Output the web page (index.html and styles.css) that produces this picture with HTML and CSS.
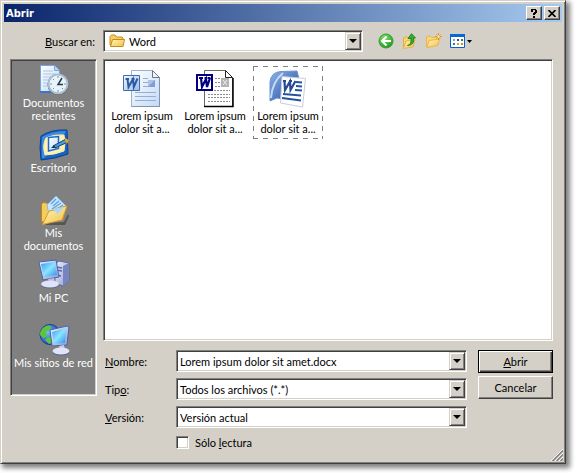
FILE: index.html
```html
<!DOCTYPE html>
<html lang="es">
<head>
<meta charset="utf-8">
<title>Abrir</title>
<link rel="stylesheet" href="styles.css">
</head>
<body>
<svg class="defs" aria-hidden="true">
  <defs>
    <linearGradient id="screen" x1="0" y1="0" x2="1" y2="1"><stop offset="0" stop-color="#2c9cf4"/><stop offset=".5" stop-color="#8be4ff"/><stop offset="1" stop-color="#2b8bea"/></linearGradient>
    <linearGradient id="folder" x1="0" y1="0" x2="1" y2="1"><stop offset="0" stop-color="#fff6b8"/><stop offset="1" stop-color="#f3c04a"/></linearGradient>
    <linearGradient id="paper" x1="0" y1="0" x2="1" y2="1"><stop offset="0" stop-color="#ffffff"/><stop offset="1" stop-color="#c4d9f4"/></linearGradient>
    <linearGradient id="blue" x1="0" y1="0" x2="1" y2="1"><stop offset="0" stop-color="#8fb3e8"/><stop offset="1" stop-color="#1d4a9e"/></linearGradient>
    <linearGradient id="badge" x1="0" y1="0" x2="1" y2="1"><stop offset="0" stop-color="#f4f8ff"/><stop offset="1" stop-color="#9dbbe8"/></linearGradient>
    <linearGradient id="metal" x1="0" y1="0" x2="1" y2="1"><stop offset="0" stop-color="#eef0fc"/><stop offset="1" stop-color="#8f9bd0"/></linearGradient>
    <radialGradient id="green" cx=".4" cy=".3" r=".7"><stop offset="0" stop-color="#8be070"/><stop offset="1" stop-color="#1f9a22"/></radialGradient>
    <radialGradient id="globe" cx=".35" cy=".35" r=".7"><stop offset="0" stop-color="#7cc3ff"/><stop offset="1" stop-color="#0c3fae"/></radialGradient>
  </defs>
</svg>
<main class="dialog">
  <header class="titlebar">
    <h1>Abrir</h1>
    <button class="caption" type="button" aria-label="Ayuda"><svg width="8" height="9" viewBox="0 0 8 9"><path d="M1 0h5v1h1v3H6v1H5v1H3V4h1V3h1V1H3v2H1zM3 7h2v2H3z"/></svg></button>
    <button class="caption" type="button" aria-label="Cerrar"><svg width="8" height="7" viewBox="0 0 8 7"><path d="M.5 0 7.500 7M7.500 0 .5 7" stroke="#000" stroke-width="1.600"/></svg></button>
  </header>

  <div class="toolbar">
    <label for="lookin"><u>B</u>uscar en:</label>
    <div class="combo combo-folder">
      <svg class="combo-icon" width="16" height="14" viewBox="0 0 16 14"><path d="M1 11V2.500L2.500 1H6l1.500 2H13l1 1v7z" fill="#f7cf63" stroke="#c98a1c"/><path d="M1.500 12.500 3.500 5.500H15.500L14 12.500z" fill="url(#folder)" stroke="#c98a1c"/></svg>
      <select id="lookin"><option>Word</option></select>
      <span class="arrow"></span>
    </div>
    <div class="tools">
      <button type="button" aria-label="Atrás"><svg width="16" height="16" viewBox="0 0 16 16"><circle cx="8" cy="8" r="7" fill="url(#green)" stroke="#33a02c"/><path d="M8.500 3.500 4 8l4.500 4.500M4.500 8H13" fill="none" stroke="#fff" stroke-width="2"/></svg></button>
      <button type="button" aria-label="Subir un nivel"><svg width="16" height="16" viewBox="0 0 16 16"><path d="M1.500 14.500V5l3-1.500L6 5l5-1v8z" fill="#f8d66f" stroke="#dfae42"/><path d="M1.500 15.500 4 8l9-2-2 8z" fill="url(#folder)" stroke="#e3b64c"/><path d="M5.500 12.500Q9.500 12 9 5.500H6L9.500.700 13.500 5H11.500Q13 12 5.500 12.500z" fill="#37ad2b" stroke="#16791a" stroke-width=".8"/></svg></button>
      <button type="button" aria-label="Crear nueva carpeta"><svg width="16" height="16" viewBox="0 0 16 16"><path d="M.5 14V4L4 3l1.500 1.500L12 4v8z" fill="#f8d878" stroke="#e6b652"/><path d="M1 14.500 3 7.500 13.500 6 11.500 12.500z" fill="url(#folder)" stroke="#e6b652"/><path d="M12.500 0v7M9 3.500h7M10.500 1.500l4 4M14.500 1.500l-4 4" stroke="#dc9428"/><circle cx="12.500" cy="3.500" r="1.200" fill="#fff3b0"/></svg></button>
      <button type="button" aria-label="Vistas"><svg width="23" height="16" viewBox="0 0 23 16"><path d="M.5 1.500h14v13H.5z" fill="#fff" stroke="#0a5fd0"/><path d="M0 1h15v3H0z" fill="#0868d8"/><path d="M3 6h2v2H3z" fill="#9a9ab0"/><path d="M7 6h2v2H7z" fill="#2848b8"/><path d="M11 6h2v2h-2z" fill="#33913a"/><path d="M3 10h2v2H3z" fill="#3c68d8"/><path d="M7 10h2v2H7z" fill="#d8a020"/><path d="M11 10h2v2h-2z" fill="#c89028"/><path d="M17 7h5l-2.500 3z"/></svg></button>
    </div>
  </div>

  <div class="content">
    <nav class="places">
      <a href="#recientes"><svg width="32" height="32" viewBox="0 0 32 32"><path d="M2.500 1.500h14l5 5v21h-19z" fill="url(#paper)" stroke="#73a6e8"/><path d="M16.500 1.500v5h5" fill="#b8d4fa" stroke="#73a6e8"/><path d="M5 7h10M5 10h13M5 13h8M5 16h6M5 19h5M5 22h5" stroke="#a9c6ee"/><path d="M2 28h20" stroke="#3974d8" stroke-width="2"/><circle cx="20" cy="20.500" r="10.500" fill="#46505c"/><circle cx="20" cy="20" r="9.500" fill="#e7f3fa" stroke="#aebdca" stroke-width="2"/><path d="M20 12v2M20 26v2M12 20h2M26 20h2M15 15l1 1M24 24l1 1M15 25l1-1" stroke="#7490aa"/><path d="M24 14 20 20.500H25" fill="none" stroke="#27394c" stroke-width="1.500"/></svg><span>Documentos recientes</span></a>
      <a href="#escritorio"><svg width="32" height="32" viewBox="0 0 32 32"><path d="M3 7Q14 0 29 1l1 24Q17 30 3 31Q1 18 3 7z" fill="#1564c8" stroke="#0a3f94"/><path d="M4 8Q14 2 28 2l-2 4L6 29H4z" fill="#4c9df0" opacity=".7"/><path d="M8 9Q16 5 26 6Q28 14 26 22Q16 26 7 26Q4 16 8 9z" fill="#fff0b5" stroke="#ffe9a0"/><path d="M10.500 8.500 20.500 7.500V19.500L10.500 22z" fill="url(#paper)" stroke="#1b6ad0" stroke-width="1.500"/><path d="m15 17 13-7 2 3-13 6z" fill="#489dd8" stroke="#154872"/><path d="m13 19 3-3 2 3z" fill="#163a5c"/><path d="m27 9 4 2-2 4-2-3z" fill="#e4a030"/></svg><span>Escritorio</span></a>
      <a href="#documentos"><svg width="32" height="32" viewBox="0 0 32 32"><path d="m6 29 20-1 4-8 1 2-4 9H8z" fill="#555"/><path d="M3.500 28V10l2-1.500 5 1 2 3 13-2v15z" fill="#f5cd57" stroke="#bd8520"/><path d="m9 11 9-9 10 10-8 13-8 1z" fill="#c9e6ff" stroke="#85b9e8"/><path d="m13 10 5-5M15 12l6-5M14 15l9-6M16 17l9-6M17 20l7-6" stroke="#62a5e6" stroke-width="1.500"/><path d="M4.500 30.500 11 17l5-1 3-2 10-2-5 14z" fill="url(#folder)" stroke="#d59d2d"/><path d="m15 16 4-2 7-1-6 7z" fill="#a9d7fa"/></svg><span>Mis documentos</span></a>
      <a href="#pc"><svg width="32" height="32" viewBox="0 0 32 32"><path d="m17 5 4-3 10 2v18l-6 5-8-3z" fill="url(#metal)" stroke="#5d6cae"/><path d="m25 7 6-3v18l-6 5z" fill="#7784bc"/><path d="m18 8 6 1M18 11l6 1M19 16l4 1" stroke="#5868a8" stroke-width="1.500"/><path d="m1 3 17-2 3 17-16 3z" fill="url(#metal)" stroke="#4a62b0"/><path d="m3 5 14-2 2 13-13 2z" fill="url(#screen)"/><path d="m10 20 6-1 1 4-6 1z" fill="#b4bde4"/><ellipse cx="12" cy="26" rx="9" ry="3.500" fill="#5d678e"/><ellipse cx="12" cy="25" rx="9" ry="3.500" fill="#dfe3f8"/></svg><span>Mi PC</span></a>
      <a href="#red"><svg width="32" height="32" viewBox="0 0 32 32"><circle cx="12" cy="10.500" r="10" fill="url(#globe)" stroke="#183c94"/><path d="M4 5q5-5 9-3l-1 4-4 2 1 4-3 2-4-3q0-4 2-6zM10 13l5 1-1 5-3 1-4-4z" fill="#5cc63b"/><path d="m12 6 17-4 2 1-2 18-15 1z" fill="url(#metal)" stroke="#4a62b0"/><path d="m14 8 14-4-1 15-11 1z" fill="url(#screen)"/><path d="m21 22 5-1 1 5h-5z" fill="#c6cce8"/><ellipse cx="23" cy="28" rx="8.500" ry="3.500" fill="#56608a"/><ellipse cx="23" cy="27" rx="8.500" ry="3.500" fill="#e0e4f8"/></svg><span>Mis sitios de red</span></a>
    </nav>

    <div class="main">
      <ul class="files">
        <li><svg width="38" height="38" viewBox="0 0 38 38"><path d="M8.500.5h21l7 7v29h-28z" fill="url(#paper)" stroke="#9fb0cb"/><path d="M29.500.5v7h7z" fill="#eef3fa" stroke="#66788f"/><path d="M36.500 8v28.500h-28" fill="none" stroke="#7f93b5"/><path d="M20 8.500h5M20 12.500h5M20 16.500h5M12 22.500h21M12 26.500h21M12 30.500h21" stroke="#93aed6"/><path d="M25 10h7v7h-7z" fill="#a9c3ea"/><path d="m25 17 7-7v7z" fill="#7f9fd4"/><path d="M.5 5.500h16v15H.5z" fill="url(#badge)" stroke="#3f6fb2"/><path d="M2.500 9H6M8.500 9h3M4.500 9l1 8L10 9l.800 8L14.500 8.500" fill="none" stroke="#2b5aa5" stroke-width="2"/></svg><span>Lorem ipsum dolor sit a...</span></li>
        <li><svg width="38" height="38" viewBox="0 0 38 38"><path d="M8.500.5h21l7 7v29h-28z" fill="#fff" stroke="#666"/><path d="M29.500.5v7h7z" fill="#fff" stroke="#222"/><path d="M8 36.500h29V8" fill="none" stroke="#000" stroke-width="1.500"/><path d="M19 8.500h5M19 12.500h5M19 16.500h5M12 20.500h22M12 24.500h22M12 27.500h22M12 31.500h22" stroke="#8a8a8a" stroke-dasharray="2 1"/><path d="M25 8h8v9h-8z" fill="#b4b4b4"/><path d="m27 10 4 5M31 10l-4 5" stroke="#eee"/><path d="M1 5h15v15H1z" fill="#fff" stroke="#000080" stroke-width="2"/><path d="M3 8h4M8.500 8h3M12 8h2.500M5 8l1 9L10 9l1 8L14 8" fill="none" stroke="#000080" stroke-width="2.200"/></svg><span>Lorem ipsum dolor sit a...</span></li>
        <li class="selected"><svg width="38" height="38" viewBox="0 0 38 38"><path d="M1 30V12Q2 2 12 1.500L28 1l2 8-16 20-6-1-7 3z" fill="url(#blue)" stroke="#6d93cf"/><path d="M2 28Q3 12 14 3" fill="none" stroke="#c6dbf8" stroke-width="2"/><path d="m13 6.500 23.500 2-3 28.500-22-4z" fill="#fff" stroke="#c5cedb"/><path d="M14 11h3M20 11h3M15.500 11l.5 9 5-8.500.5 8.500 5-9" fill="none" stroke="#254a93" stroke-width="2.200"/><path d="m27 12 6 .5M27 16l6 .5M26 20l7 .5M14 24l18 1.500M13 28l19 2.500" stroke="#24539f" stroke-width="2"/></svg><span>Lorem ipsum dolor sit a...</span></li>
      </ul>

      <form class="form">
        <label for="name"><u>N</u>ombre:</label>
        <div class="combo"><input id="name" type="text" value="Lorem ipsum dolor sit amet.docx"><span class="arrow"></span></div>
        <label for="type">Tip<u>o</u>:</label>
        <div class="combo"><select id="type"><option>Todos los archivos (*.*)</option></select><span class="arrow"></span></div>
        <label for="version"><u>V</u>ersión:</label>
        <div class="combo"><select id="version"><option>Versión actual</option></select><span class="arrow"></span></div>
        <label class="check"><input type="checkbox"><span>Sólo <u>l</u>ectura</span></label>
        <div class="actions">
          <button class="push default" type="submit"><u>A</u>brir</button>
          <button class="push" type="button">Cancelar</button>
        </div>
      </form>
    </div>
  </div>
  <svg class="grip" width="12" height="12" viewBox="0 0 12 12"><path d="M0 12 12 0M4 12l8-8M8 12l4-4" stroke="#fff"/><path d="M1.500 12 12 1.500M5.500 12 12 5.500M9.500 12 12 9.500" stroke="#808080" stroke-width="1.500"/></svg>
</main>
</body>
</html>
```
FILE: styles.css
```css
* { box-sizing: border-box; }

body {
  margin: 0;
  min-height: 100vh;
  padding: 0 9px 9px 0;
  display: flex;
  flex-direction: column;
  background: #fff;
  color: #000;
  font: 11px/13px Lato, "Liberation Sans", sans-serif;
}

button, input, select { font: inherit; color: inherit; margin: 0; }
u { text-underline-offset: 1px; }
svg { display: block; flex: none; }
.defs { position: absolute; width: 0; height: 0; }

.dialog {
  position: relative;
  flex: 1;
  display: flex;
  flex-direction: column;
  padding: 2px;
  background: #d4d0c8;
  border: 1px solid;
  border-color: #d4d0c8 #404040 #404040 #d4d0c8;
  box-shadow: inset 1px 1px #fff, inset -1px -1px #808080, 3px 3px 5px 1px rgba(0, 0, 0, .5);
}

.titlebar {
  display: flex;
  align-items: center;
  gap: 2px;
  height: 18px;
  margin: 1px;
  padding: 0 2px;
  background: linear-gradient(90deg, #0a246a, #a6caf0);
}
.titlebar h1 {
  flex: 1;
  margin: 0;
  color: #fff;
  font: bold 11px/13px "DejaVu Sans Condensed", sans-serif;
}
.caption {
  display: grid;
  place-items: center;
  width: 16px;
  height: 14px;
  padding: 0;
  background: #d4d0c8;
  border: 1px solid;
  border-color: #fff #404040 #404040 #fff;
  box-shadow: inset -1px -1px #808080;
}

.toolbar {
  display: grid;
  grid-template-columns: 93px minmax(0, 260px) 1fr;
  align-items: center;
  margin-top: 7px;
  padding-left: 7px;
}
.toolbar label { text-align: right; padding-right: 8px; }
.tools { display: flex; gap: 8px; padding-left: 15px; }
.tools button { padding: 0; border: 0; background: none; }

/* sunken edge shared by every field and well */
.combo, .places, .files {
  border: 1px solid;
  border-color: #808080 #fff #fff #808080;
  box-shadow: inset 1px 1px #404040, inset -1px -1px #d4d0c8;
}

.combo {
  display: grid;
  height: 22px;
  padding: 1px;
  align-items: center;
  background: #fff;
}
.combo > * { grid-area: 1 / 1; }
.combo select, .combo input {
  appearance: none;
  width: 100%;
  height: 18px;
  min-width: 0;
  padding: 0 20px 0 2px;
  border: 0;
  border-radius: 0;
  outline: 0;
  background: none;
}
.combo-folder select { padding-left: 24px; }
.combo-icon { margin-left: 4px; }
.arrow {
  justify-self: end;
  display: grid;
  place-items: center;
  width: 16px;
  height: 18px;
  pointer-events: none;
  background: #d4d0c8;
  border: 1px solid;
  border-color: #d4d0c8 #404040 #404040 #d4d0c8;
  box-shadow: inset 1px 1px #fff, inset -1px -1px #808080;
}
.arrow::before {
  content: "";
  border: 4px solid transparent;
  border-top-color: #000;
  border-bottom: 0;
}

.content {
  flex: 1;
  display: grid;
  grid-template-columns: 87px minmax(0, 1fr);
  gap: 6px;
  padding: 7px 10px 12px 7px;
}

.places {
  display: grid;
  grid-auto-rows: 65px;
  align-content: start;
  margin-bottom: 53px;
  padding: 4px 1px;
  background: #808080;
}
.places a {
  display: flex;
  flex-direction: column;
  align-items: center;
  color: #fff;
  text-align: center;
  text-decoration: none;
}
.places span { max-width: 83px; }
.places a:not(:last-child) span { max-width: 66px; }

.main { display: flex; flex-direction: column; gap: 9px; min-width: 0; }

.files {
  flex: 1;
  display: flex;
  align-items: flex-start;
  gap: 3px;
  margin: 0;
  padding: 6px 3px;
  background: #fff;
  list-style: none;
}
.files li {
  display: flex;
  flex-direction: column;
  align-items: center;
  gap: 1px;
  width: 70px;
  padding: 4px 3px;
  text-align: center;
}
.files .selected {
  background:
    repeating-linear-gradient(90deg, #808080 0 5px, transparent 5px 10px) top / 100% 1px no-repeat,
    repeating-linear-gradient(90deg, #808080 0 5px, transparent 5px 10px) bottom / 100% 1px no-repeat,
    repeating-linear-gradient(#808080 0 5px, transparent 5px 10px) left / 1px 100% no-repeat,
    repeating-linear-gradient(#808080 0 5px, transparent 5px 10px) right / 1px 100% no-repeat;
}

.form {
  display: grid;
  grid-template-columns: 72px minmax(0, 1fr) 75px;
  column-gap: 1px;
  row-gap: 6px;
  align-items: center;
}
.form > label { grid-column: 1; padding-left: 2px; }
.form > .combo { grid-column: 2; margin-right: 10px; }
.form > .check {
  grid-column: 2;
  display: flex;
  align-items: center;
  gap: 6px;
  padding: 2px 0 0;
}
.check input {
  appearance: none;
  width: 13px;
  height: 13px;
  background: #fff;
  border: 1px solid;
  border-color: #808080 #fff #fff #808080;
  box-shadow: inset 1px 1px #404040, inset -1px -1px #d4d0c8;
}
.check input:checked { background: #404040; }

.actions {
  grid-area: 1 / 3 / 3 / 4;
  display: grid;
  gap: 3px;
  align-self: start;
}
.push {
  height: 23px;
  padding: 0;
  background: #d4d0c8;
  border: 1px solid;
  border-color: #fff #404040 #404040 #fff;
  box-shadow: inset -1px -1px #808080;
}
.push.default {
  border-color: #000;
  box-shadow: inset 1px 1px #fff, inset -1px -1px #404040, inset -2px -2px #808080;
}

.grip { position: absolute; right: 2px; bottom: 2px; }
```
